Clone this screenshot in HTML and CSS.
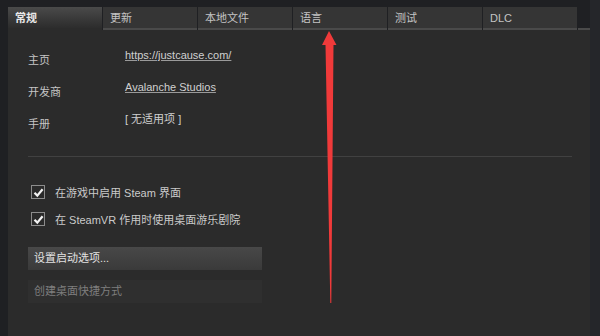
FILE: index.html
```html
<!DOCTYPE html>
<html>
<head>
  <title>属性 - 常规</title>
  <link rel="stylesheet" href="styles.css">
</head>
<body>
  <div class=frame>
    <div class=tabs>
      <div class='tab active'>常规</div>
      <div class=tab>更新</div>
      <div class=tab>本地文件</div>
      <div class=tab>语言</div>
      <div class=tab>测试</div>
      <div class=tab>DLC</div>
      <div class=tab-fill></div>
    </div>
    <div class=panel>
      <div class=info>
        <div class=row><span class=label>主页</span><a class=value href="#">https://justcause.com/</a></div>
        <div class=row><span class=label>开发商</span><a class=value href="#">Avalanche Studios</a></div>
        <div class=row><span class=label>手册</span><span class=value>[ 无适用项 ]</span></div>
      </div>
      <div class=sep></div>
      <div class=checks>
        <label class=check><span class=box><svg width="11" height="11" viewBox="0 0 11 11"><path d="M1.5 5.8 L4.3 8.6 L9.6 2.2" fill="none" stroke="#f2f2f2" stroke-width="2.2"/></svg></span>在游戏中启用 Steam 界面</label>
        <label class=check><span class=box><svg width="11" height="11" viewBox="0 0 11 11"><path d="M1.5 5.8 L4.3 8.6 L9.6 2.2" fill="none" stroke="#f2f2f2" stroke-width="2.2"/></svg></span>在 SteamVR 作用时使用桌面游乐剧院</label>
      </div>
      <div class=btn>设置启动选项...</div>
      <div class='btn disabled'>创建桌面快捷方式</div>
    </div>
    <div class=edge></div>
  </div>
  <svg class=arrow width="30" height="280" viewBox="0 0 30 280">
    <path d="M11 1 L18.5 15 L15.5 15 L13.3 273 L12.3 273 L7.5 15 L4 15 Z" fill="#f03a3a"/>
  </svg>
</body>
</html>
```
FILE: styles.css
```css
body, html {
  margin: 0;
  width: 100%;
  height: 100%;
  overflow: hidden;
}
body {
  background: #1f2023;
  font-family: "Liberation Sans", "Noto Sans CJK SC", sans-serif;
  font-size: 11px;
  color: #c6c6c6;
  position: relative;
}
.frame {
  display: flex;
  flex-direction: column;
  height: 100%;
  padding-left: 8px;
  padding-top: 7px;
  box-sizing: border-box;
}
.tabs {
  display: flex;
  width: 582px;
  height: 23px;
  flex-shrink: 0;
}
.tab {
  width: 94px;
  margin-right: 1px;
  box-sizing: border-box;
  padding: 3px 0 0 7px;
  background: #353535;
  color: #c4c4c4;
  border-bottom: 2px solid #4a4a4a;
  line-height: 17px;
}
.tab.active {
  background: linear-gradient(#4a4a4a, #2c2c2c);
  border-bottom: 2px solid #2b2b2b;
  color: #e8e8e8;
  font-weight: bold;
}
.tab-fill {
  flex: 1;
  border-bottom: 2px solid #4a4a4a;
}
.panel {
  flex: 1;
  width: 582px;
  background: #2b2b2b;
  padding: 17px 0 0 20px;
  box-sizing: border-box;
}
.info {
  display: flex;
  flex-direction: column;
  gap: 16px;
}
.row {
  display: flex;
  height: 16px;
  line-height: 16px;
}
.label {
  width: 97px;
  padding-top: 5px;
}
.value {
  color: #d0d0d0;
}
a.value {
  text-decoration: underline;
  text-decoration-color: #9a9a9a;
}
.sep {
  height: 1px;
  background: #414141;
  margin: 29px 18px 0 0;
}
.checks {
  display: flex;
  flex-direction: column;
  gap: 7px;
  padding: 25px 0 0 3px;
}
.check {
  display: flex;
  align-items: center;
  gap: 10px;
  height: 20px;
  color: #cacaca;
  font-size: 11px;
}
.box {
  width: 12px;
  height: 12px;
  border: 1px solid #8c8c8c;
  background: #2a2a2a;
  display: flex;
  align-items: center;
  justify-content: center;
}
.btn {
  width: 234px;
  height: 23px;
  line-height: 23px;
  padding-left: 6px;
  box-sizing: border-box;
  background: linear-gradient(#484848, #3a3a3a);
  color: #e2e2e2;
  margin-top: 18px;
}
.btn.disabled {
  background: #2f2f2f;
  color: #7e7e7e;
  margin-top: 10px;
}
.edge {
  position: absolute;
  top: 0;
  right: 0;
  width: 10px;
  height: 100%;
  background: #25262a;
}
.arrow {
  position: absolute;
  left: 318px;
  top: 30px;
}
```
